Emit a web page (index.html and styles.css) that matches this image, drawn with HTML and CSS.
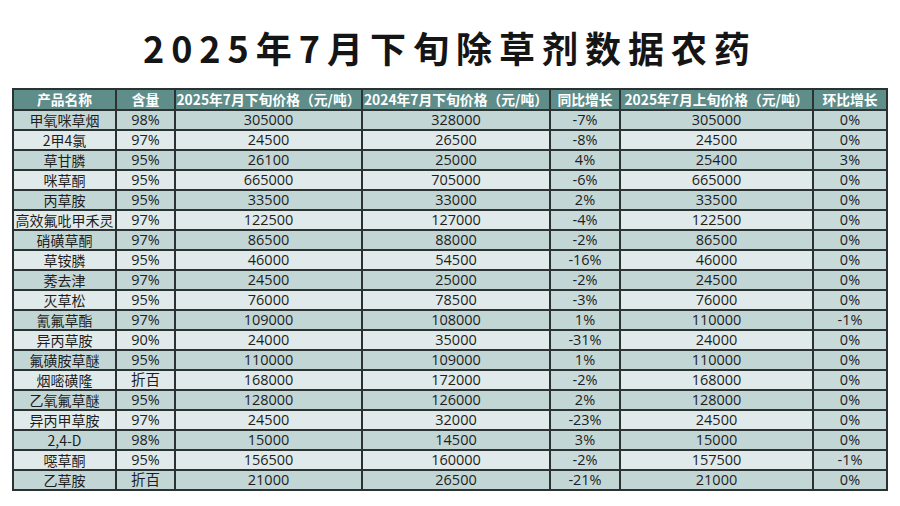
FILE: index.html
```html
<!DOCTYPE html>
<html lang="zh">
<head>
<meta charset="utf-8">
<link rel="stylesheet" href="styles.css">
</head>
<body>
<div class="page">
  <h1 class="title">2025年7月下旬除草剂数据农药</h1>
  <table class="grid">
    <colgroup>
      <col class="c1"><col class="c2"><col class="c3"><col class="c4"><col class="c5"><col class="c6"><col class="c7">
    </colgroup>
    <thead>
      <tr><th>产品名称</th><th>含量</th><th>2025年7月下旬价格（元/吨）</th><th>2024年7月下旬价格（元/吨）</th><th>同比增长</th><th>2025年7月上旬价格（元/吨）</th><th>环比增长</th></tr>
    </thead>
    <tbody>
      <tr><td>甲氧咪草烟</td><td>98%</td><td>305000</td><td>328000</td><td class="yoy">-7%</td><td>305000</td><td class="mom">0%</td></tr>
      <tr><td>2甲4氯</td><td>97%</td><td>24500</td><td>26500</td><td class="yoy">-8%</td><td>24500</td><td class="mom">0%</td></tr>
      <tr><td>草甘膦</td><td>95%</td><td>26100</td><td>25000</td><td class="yoy">4%</td><td>25400</td><td class="mom">3%</td></tr>
      <tr><td>咪草酮</td><td>95%</td><td>665000</td><td>705000</td><td class="yoy">-6%</td><td>665000</td><td class="mom">0%</td></tr>
      <tr><td>丙草胺</td><td>95%</td><td>33500</td><td>33000</td><td class="yoy">2%</td><td>33500</td><td class="mom">0%</td></tr>
      <tr><td>高效氟吡甲禾灵</td><td>97%</td><td>122500</td><td>127000</td><td class="yoy">-4%</td><td>122500</td><td class="mom">0%</td></tr>
      <tr><td>硝磺草酮</td><td>97%</td><td>86500</td><td>88000</td><td class="yoy">-2%</td><td>86500</td><td class="mom">0%</td></tr>
      <tr><td>草铵膦</td><td>95%</td><td>46000</td><td>54500</td><td class="yoy">-16%</td><td>46000</td><td class="mom">0%</td></tr>
      <tr><td>莠去津</td><td>97%</td><td>24500</td><td>25000</td><td class="yoy">-2%</td><td>24500</td><td class="mom">0%</td></tr>
      <tr><td>灭草松</td><td>95%</td><td>76000</td><td>78500</td><td class="yoy">-3%</td><td>76000</td><td class="mom">0%</td></tr>
      <tr><td>氰氟草酯</td><td>97%</td><td>109000</td><td>108000</td><td class="yoy">1%</td><td>110000</td><td class="mom">-1%</td></tr>
      <tr><td>异丙草胺</td><td>90%</td><td>24000</td><td>35000</td><td class="yoy">-31%</td><td>24000</td><td class="mom">0%</td></tr>
      <tr><td>氟磺胺草醚</td><td>95%</td><td>110000</td><td>109000</td><td class="yoy">1%</td><td>110000</td><td class="mom">0%</td></tr>
      <tr><td>烟嘧磺隆</td><td>折百</td><td>168000</td><td>172000</td><td class="yoy">-2%</td><td>168000</td><td class="mom">0%</td></tr>
      <tr><td>乙氧氟草醚</td><td>95%</td><td>128000</td><td>126000</td><td class="yoy">2%</td><td>128000</td><td class="mom">0%</td></tr>
      <tr><td>异丙甲草胺</td><td>97%</td><td>24500</td><td>32000</td><td class="yoy">-23%</td><td>24500</td><td class="mom">0%</td></tr>
      <tr><td>2,4-D</td><td>98%</td><td>15000</td><td>14500</td><td class="yoy">3%</td><td>15000</td><td class="mom">0%</td></tr>
      <tr><td>噁草酮</td><td>95%</td><td>156500</td><td>160000</td><td class="yoy">-2%</td><td>157500</td><td class="mom">-1%</td></tr>
      <tr><td>乙草胺</td><td>折百</td><td>21000</td><td>26500</td><td class="yoy">-21%</td><td>21000</td><td class="mom">0%</td></tr>
    </tbody>
  </table>
</div>
</body>
</html>
```

FILE: styles.css
```css
html, body {
  margin: 0;
  padding: 0;
  background: #ffffff;
}
.page {
  width: 900px;
  height: 506px;
  padding: 0 0 0 12px;
  box-sizing: border-box;
  overflow: hidden;
}
.title {
  margin: 0;
  height: 88px;
  box-sizing: border-box;
  padding-top: 22px;
  width: 876px;
  text-align: center;
  font-family: "Noto Sans CJK SC", "Noto Sans", sans-serif;
  font-weight: 700;
  font-size: 36px;
  line-height: 50px;
  letter-spacing: 7px;
  color: #151515;
}
.grid {
  border-collapse: collapse;
  table-layout: fixed;
  width: 874px;
  font-family: "Open Sans", "Noto Sans CJK SC", sans-serif;
  font-size: 14.5px;
  color: #1e1e1e;
}
.c1 { width: 103px; }
.c2 { width: 59px; }
.c3 { width: 187px; }
.c4 { width: 188px; }
.c5 { width: 70px; }
.c6 { width: 193px; }
.c7 { width: 74px; }
.grid th,
.grid td {
  border: 2px solid #2c3232;
  padding: 0;
  text-align: center;
  white-space: nowrap;
}
.grid td {
  overflow: hidden;
}
.grid th {
  height: 19px;
  line-height: 17px;
  background: #5e8d8a;
  color: #ffffff;
  font-family: "Noto Sans CJK SC", sans-serif;
  font-weight: 700;
  font-size: 13.8px;
  letter-spacing: 0;
}
.grid td {
  height: 18px;
  line-height: 18px;
}
.grid tbody tr:nth-child(odd) td {
  background: #c3d6d6;
}
.grid tbody tr:nth-child(even) td {
  background: #e0eaea;
}
.grid tbody tr:nth-child(even) td.yoy,
.grid tbody tr:nth-child(even) td.mom {
  background: #c8dada;
}
.grid td:first-child {
  font-family: "Noto Sans CJK SC", sans-serif;
  font-size: 14px;
}
```
